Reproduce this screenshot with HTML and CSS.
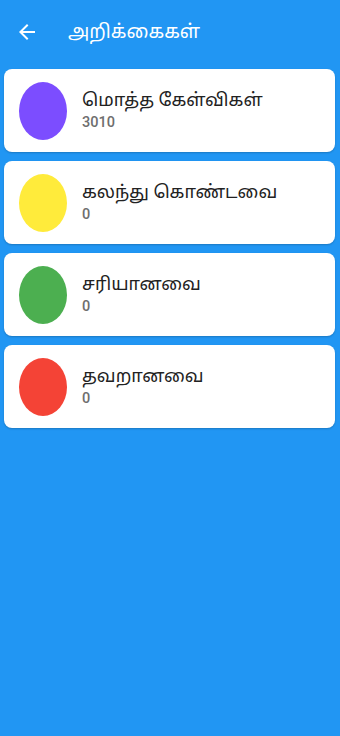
FILE: index.html
```html
<!DOCTYPE html>
<html lang="ta">
<head>
<meta charset="utf-8">
<link rel="stylesheet" href="styles.css">
</head>
<body>
<header class="bar">
  <svg class="back" viewBox="0 0 24 24" width="24" height="24"><path d="M20 11H7.83l5.59-5.59L12 4l-8 8 8 8 1.41-1.41L7.83 13H20v-2z" fill="#fff"/></svg>
  <h1 class="title">அறிக்கைகள்</h1>
</header>
<main class="list">
  <div class="card">
    <div class="dot purple"></div>
    <div class="text"><div class="name">மொத்த கேள்விகள்</div><div class="count">3010</div></div>
  </div>
  <div class="card">
    <div class="dot yellow"></div>
    <div class="text"><div class="name">கலந்து கொண்டவை</div><div class="count">0</div></div>
  </div>
  <div class="card">
    <div class="dot green"></div>
    <div class="text"><div class="name">சரியானவை</div><div class="count">0</div></div>
  </div>
  <div class="card">
    <div class="dot red"></div>
    <div class="text"><div class="name">தவறானவை</div><div class="count">0</div></div>
  </div>
</main>
</body>
</html>
```
FILE: styles.css
```css
html, body {
  margin: 0;
  padding: 0;
  background: #2196F3;
  height: 100%;
}
body {
  font-family: Roboto, "Noto Sans", "Noto Sans Tamil", sans-serif;
}
.bar {
  height: 64px;
  display: flex;
  align-items: center;
  padding-left: 15px;
}
.back {
  display: block;
}
.title {
  margin: 1px 0 0 29px;
  color: #fff;
  font-weight: 400;
  font-size: 19px;
}
.list {
  display: flex;
  flex-direction: column;
  gap: 9px;
  padding: 5px 5px 0 4px;
}
.card {
  background: #fff;
  border-radius: 8px;
  height: 83px;
  display: flex;
  align-items: center;
  padding-left: 15px;
  box-shadow: 0 1px 2px rgba(0,0,0,0.2);
}
.dot {
  width: 48px;
  height: 58px;
  border-radius: 50%;
  flex: none;
}
.purple { background: #7C4DFF; }
.yellow { background: #FFEB3B; }
.green { background: #4CAF50; }
.red { background: #F44336; }
.text {
  margin-left: 15px;
}
.name {
  font-size: 18px;
  color: #222;
  line-height: 24px;
}
.count {
  font-size: 14.5px;
  font-weight: 500;
  color: #6e6e6e;
  line-height: 20px;
  margin-top: 1px;
}
```
